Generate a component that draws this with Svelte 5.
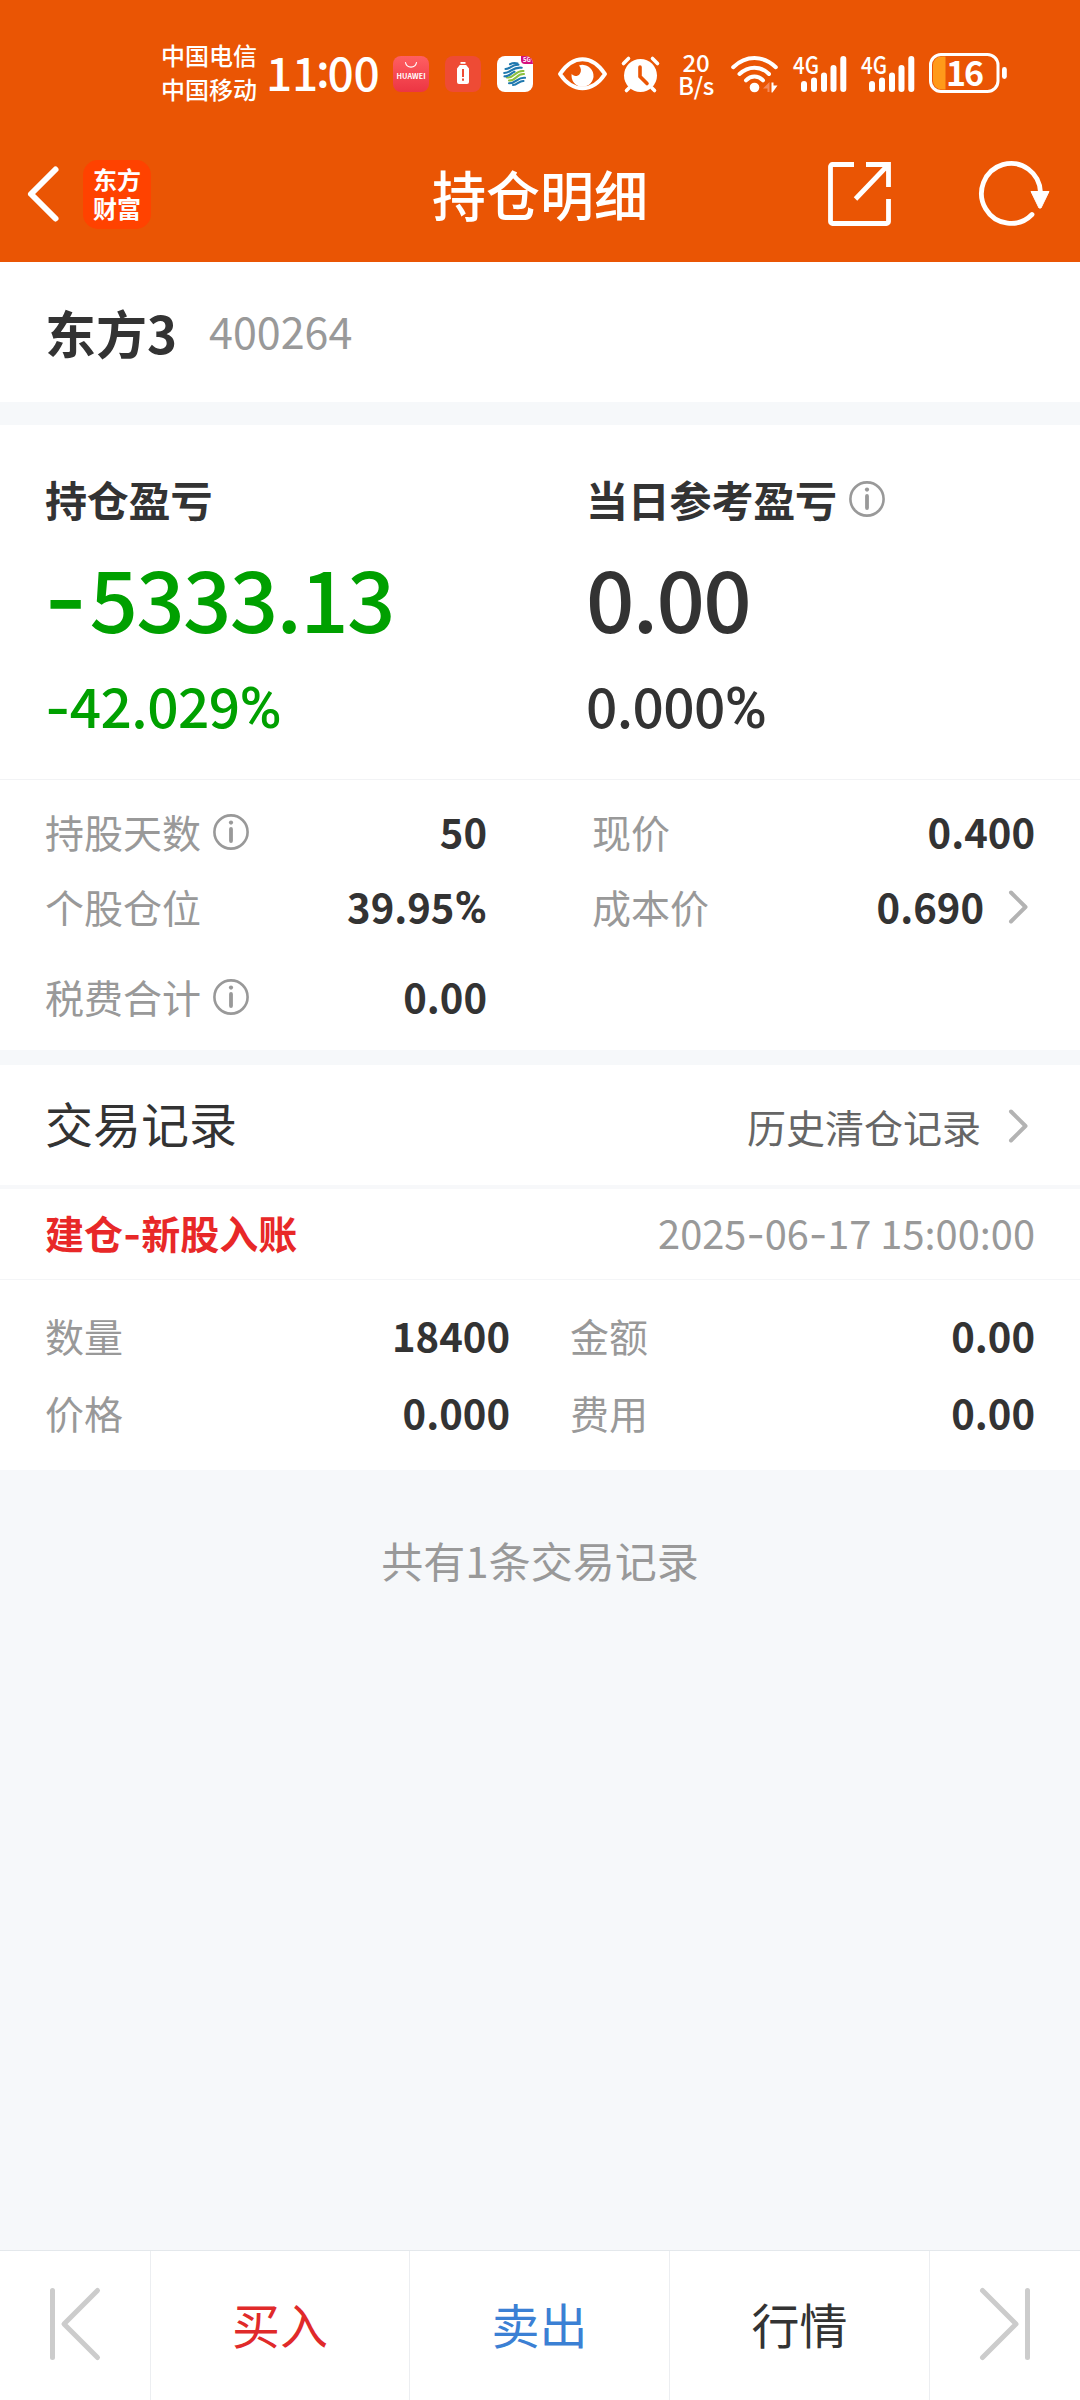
<script lang="ts">
  type Cell = {
    label: string;
    value: string;
    info?: boolean;
    link?: boolean;
  };

  const carriers = ["中国电信", "中国移动"];
  const signalBars = [
    { x: 8, y: 25, h: 11 },
    { x: 18, y: 21.5, h: 14.5 },
    { x: 28, y: 16.5, h: 19.5 },
    { x: 37.5, y: 9, h: 27 },
    { x: 47.3, y: 0, h: 36 },
  ];

  const stock = { name: "东方3", code: "400264" };

  const detailRows: Cell[][] = [
    [
      { label: "持股天数", value: "50", info: true },
      { label: "现价", value: "0.400" },
    ],
    [
      { label: "个股仓位", value: "39.95%" },
      { label: "成本价", value: "0.690", link: true },
    ],
    [{ label: "税费合计", value: "0.00", info: true }],
  ];

  const records = [
    {
      title: "建仓-新股入账",
      time: "2025-06-17 15:00:00",
      cells: [
        { label: "数量", value: "18400" },
        { label: "金额", value: "0.00" },
        { label: "价格", value: "0.000" },
        { label: "费用", value: "0.00" },
      ],
    },
  ];

  const actions = [
    { label: "买入", kind: "buy" },
    { label: "卖出", kind: "sell" },
    { label: "行情", kind: "quote" },
  ];
</script>

<!-- hyphen and percent sign come from other faces than the digits -->
{#snippet figure(text: string)}
  {#each text.split(/([-%])/) as part}{#if part === "-"}<span class="dash">-</span>{:else if part === "%"}<span class="pct">%</span>{:else}{part}{/if}{/each}
{/snippet}

{#snippet infoIcon()}
  <svg class="info" width="36" height="36" viewBox="0 0 36 36">
    <circle cx="18" cy="18" r="16.6" fill="none" stroke="currentColor" stroke-width="2.6" />
    <circle cx="18" cy="8.6" r="2.1" fill="currentColor" />
    <path d="M18 15v12" stroke="currentColor" stroke-width="3.8" stroke-linecap="round" />
  </svg>
{/snippet}

{#snippet chevron()}
  <svg class="chevron" width="19" height="34" viewBox="0 0 19 34">
    <path d="M2 2.5 16.5 17 2 31.5" fill="none" stroke="#b3b3b3" stroke-width="4" stroke-linecap="round" stroke-linejoin="round" />
  </svg>
{/snippet}

{#snippet signal()}
  <svg class="signal" width="54" height="36" viewBox="0 0 54 36" fill="#fff">
    <text x="0" y="17.5" textLength="26" lengthAdjust="spacingAndGlyphs" font-size="24" font-weight="500">4G</text>
    {#each signalBars as bar}
      <rect x={bar.x} y={bar.y} width="6" height={bar.h} rx="3" />
    {/each}
  </svg>
{/snippet}

<div class="screen">
  <header>
    <div class="status">
      <div class="carriers">
        {#each carriers as carrier}
          <span>{carrier}</span>
        {/each}
      </div>
      <span class="clock">11<i>:</i>00</span>
      <div class="apps">
        <svg width="36" height="36" viewBox="0 0 36 36">
          <defs>
            <linearGradient id="hw" x1="0" y1="0" x2="0" y2="1">
              <stop offset="0" stop-color="#ff5f62" />
              <stop offset="1" stop-color="#ec3543" />
            </linearGradient>
          </defs>
          <rect width="36" height="36" rx="8" fill="url(#hw)" />
          <path d="M12.5 6.5a5.6 5.6 0 0 0 11 0" fill="none" stroke="#fff" stroke-width="1.2" stroke-linecap="round" />
          <text x="3.6" y="23" textLength="29" lengthAdjust="spacingAndGlyphs" font-size="6.8" font-weight="700" fill="#fff">HUAWEI</text>
        </svg>
        <svg width="36" height="36" viewBox="0 0 36 36">
          <rect width="36" height="36" rx="8" fill="#ee4b35" />
          <path d="M15.5 6h5v1.8h-5z" fill="#fff" />
          <path fill-rule="evenodd" d="M14.8 9h6.4l2.8 3.4V26a2 2 0 0 1-2 2h-8a2 2 0 0 1-2-2V12.4zM17 13v8h2v-8zM17 22.6v2.2h2v-2.2z" fill="#fff" />
        </svg>
        <svg width="36" height="36" viewBox="0 0 36 36">
          <defs>
            <clipPath id="tile"><rect width="36" height="36" rx="8" /></clipPath>
          </defs>
          <g clip-path="url(#tile)">
            <rect width="36" height="36" fill="#fff" />
            <path d="M24 0h12v8h-8a4 4 0 0 1-4-4z" fill="#d5107d" />
            <text x="26" y="6.2" font-size="6" font-weight="700" fill="#fff">5G</text>
          </g>
          <g fill="none" stroke-width="2.1" stroke-linecap="round">
            <path d="M8.5 13c5 0 6-4.500 13-4.200M7.200 17c7 0 8-6.500 17.500-5.300M13 8.200c2-1 5-1.500 7.500-.6" stroke="#1f78ae" />
            <path d="M10 21.500c8 1 8-7.500 16.500-6.500M12 24.500c8 0 7-7 15-6.500" stroke="#8bbf3f" />
            <path d="M12 27.300c8 0 8-6.300 16-5.500M16 29c4.500 0 6-4.300 10.500-4M7.500 20.300c5 .5 7-3.800 10-4.500" stroke="#1f78ae" />
          </g>
        </svg>
      </div>
      <svg class="eye" width="49" height="34" viewBox="0 0 49 34">
        <path d="M2 17C8 8 16 2.2 24.5 2.2S41 8 47 17c-6 9-14 14.300-22.500 14.300S8 26 2 17z" fill="none" stroke="#fff" stroke-width="4" stroke-linejoin="round" />
        <path d="M21 8.400a11 11 0 1 1-7.300 8.400c1.500 2.800 6 2.900 8 .1 1.900-2.700 1.600-6-.7-8.500z" fill="#fff" />
      </svg>
      <svg class="alarm" width="39" height="37" viewBox="0 0 39 37">
        <g stroke="#fff" stroke-width="3.6" stroke-linecap="round">
          <path d="M2.500 7.500l5-5M36.500 7.500l-5-5M8 32l-2.500 2.500M31 32l2.500 2.500" />
        </g>
        <circle cx="19.5" cy="19.5" r="16.5" fill="#fff" />
        <path d="M19 11v9.500l7 7" fill="none" stroke="#ea5504" stroke-width="3.6" stroke-linecap="round" />
      </svg>
      <div class="speed"><span>20</span><span>B/s</span></div>
      <svg class="wifi" width="48" height="37" viewBox="0 0 48 37">
        <g fill="none" stroke="#fff" stroke-width="4" stroke-linecap="round">
          <path d="M2.200 11.200C15-1 32-1 44.800 11.200M8.500 18c9-8.500 21-8.500 29.500 0M15 24.300c5-5 12-5 17 0" />
        </g>
        <circle cx="23.5" cy="31.5" r="4.8" fill="#fff" />
        <path d="M38.500 26v10h-2v-3.500H32z" fill="#f5895a" />
        <path d="M40.500 26.500h2v3h4l-5 7h-1z" fill="#fff" />
      </svg>
      {@render signal()}
      {@render signal()}
      <svg class="battery" width="79" height="40" viewBox="0 0 79 40">
        <path d="M4 12a8.500 8.500 0 0 1 8.500-8.500H16.500v33H12.500A8.500 8.500 0 0 1 4 28z" fill="#ff9a1a" />
        <rect x="1.5" y="1.5" width="67.5" height="37" rx="10.5" fill="none" stroke="#fff" stroke-width="3" />
        <rect x="73" y="14" width="4.8" height="12" rx="2.4" fill="#fff" />
        <text x="17" y="32.5" textLength="38" lengthAdjust="spacing" font-size="34" font-weight="700" fill="#fff">16</text>
      </svg>
    </div>

    <div class="nav">
      <svg class="back" width="32" height="56" viewBox="0 0 32 56">
        <path d="M28.500 3.500 4 28l24.500 24.500" fill="none" stroke="#fff" stroke-width="6" stroke-linecap="round" stroke-linejoin="round" />
      </svg>
      <div class="logo"><span>东方</span><span>财富</span></div>
      <h1>持仓明细</h1>
      <svg class="share" width="63" height="64" viewBox="0 0 63 64" fill="none" stroke="#fff" stroke-width="4.8">
        <path d="M26 2.500H4.500a2 2 0 0 0-2 2v55a2 2 0 0 0 2 2h54a2 2 0 0 0 2-2V37" />
        <path d="M38 2.500h22.500V25M60 3 27.500 37" />
      </svg>
      <svg class="refresh" width="72" height="66" viewBox="0 0 72 66">
        <path d="M61.500 31.500A29.500 30 0 1 0 53 53.500" fill="none" stroke="#fff" stroke-width="4.8" stroke-linecap="round" />
        <path d="M52 30.500h18L62 47h-2z" fill="#fff" stroke="#fff" stroke-width="1" stroke-linejoin="round" />
      </svg>
    </div>
  </header>

  <section class="stock">
    <strong>{stock.name}</strong>
    <span>{stock.code}</span>
  </section>

  <section class="summary">
    <div class="profit loss">
      <h2>持仓盈亏</h2>
      <p class="amount">{@render figure("-5333.13")}</p>
      <p class="percent">{@render figure("-42.029%")}</p>
    </div>
    <div class="profit">
      <h2>当日参考盈亏 {@render infoIcon()}</h2>
      <p class="amount">{@render figure("0.00")}</p>
      <p class="percent">{@render figure("0.000%")}</p>
    </div>
  </section>

  <section class="details">
    {#each detailRows as row}
      <div class="row">
        {#each row as cell}
          <div class="cell">
            <span class="label">{cell.label}</span>
            {#if cell.info}{@render infoIcon()}{/if}
            <span class="value">{@render figure(cell.value)}</span>
            {#if cell.link}{@render chevron()}{/if}
          </div>
        {/each}
      </div>
    {/each}
  </section>

  <section class="history">
    <h3>交易记录</h3>
    <div class="more">
      <span>历史清仓记录</span>
      {@render chevron()}
    </div>
  </section>

  {#each records as record}
    <section class="record">
      <div class="record-head">
        <strong>{@render figure(record.title)}</strong>
        <time>{@render figure(record.time)}</time>
      </div>
      <div class="record-body">
        {#each record.cells as cell}
          <div class="cell">
            <span class="label">{cell.label}</span>
            <span class="value">{@render figure(cell.value)}</span>
          </div>
        {/each}
      </div>
    </section>
  {/each}

  <p class="total">共有{records.length}条交易记录</p>

  <footer>
    <div class="step">
      <svg width="50" height="72" viewBox="0 0 50 72" fill="none" stroke="#ccc" stroke-width="5" stroke-linecap="round" stroke-linejoin="round">
        <path d="M2.500 2.500v67M47.500 2.500 14 36l33.500 33.500" />
      </svg>
    </div>
    {#each actions as action}
      <div class="action {action.kind}">{action.label}</div>
    {/each}
    <div class="step">
      <svg width="50" height="72" viewBox="0 0 50 72" fill="none" stroke="#ccc" stroke-width="5" stroke-linecap="round" stroke-linejoin="round">
        <path d="M47.500 2.500v67M2.500 2.500 36 36 2.500 69.500" />
      </svg>
    </div>
  </footer>
</div>

<style>
  :global(body) {
    background: #f6f8fa;
  }

  .screen {
    display: flex;
    flex-direction: column;
    width: 1080px;
    height: 2400px;
    color: #333;
    background: #f6f8fa;
    font-family: "Noto Sans CJK SC", sans-serif;
  }

  .screen * { box-sizing: border-box; }
  h1, h2, h3, p { margin: 0; }
  svg { display: block; flex: none; overflow: visible; }

  .dash {
    font-family: Inter, sans-serif;
    line-height: 0;
  }

  .pct {
    font-family: Roboto, sans-serif;
    font-size: 1.04em;
    line-height: 0;
  }

  header {
    height: 262px;
    color: #fff;
    background: #ea5504;
  }

  .status {
    display: flex;
    align-items: center;
    height: 126px;
    padding: 22px 0 0 161px;
  }

  .carriers {
    display: flex;
    flex-direction: column;
    width: 97px;
    font-size: 24px;
    font-weight: 500;
    line-height: 34px;
    margin-top: -5px;
  }

  .clock {
    width: 121px;
    margin: -6px 0 0 8px;
    font-size: 46px;
    font-weight: 500;
    letter-spacing: -0.2px;
    line-height: 60px;
    white-space: nowrap;
  }

  .clock i {
    position: relative;
    top: -4px;
    margin: 0 -2px;
    font-style: normal;
  }

  .apps {
    display: flex;
    gap: 16px;
    margin-left: 6px;
  }

  .eye { margin: -1px 0 0 25px; }
  .alarm { margin-left: 14px; }

  .speed {
    display: flex;
    flex-direction: column;
    align-items: center;
    width: 36px;
    margin: -3px 0 0 18px;
    font-size: 24px;
    line-height: 23px;
    font-weight: 500;
    letter-spacing: -0.3px;
  }

  .wifi { margin-left: 17px; }
  .signal { margin-left: 14px; }
  .battery { margin: -2px 0 0 14px; }

  .nav {
    display: flex;
    align-items: center;
    height: 136px;
    padding-left: 27px;
  }

  .logo {
    display: flex;
    flex-direction: column;
    align-items: center;
    justify-content: center;
    width: 68px;
    height: 69px;
    margin-left: 24px;
    border-radius: 15px;
    background: #ff4200;
    font-size: 24px;
    font-weight: 700;
    line-height: 29px;
    padding-bottom: 3px;
  }

  h1 {
    width: 216px;
    margin: 0 0 0 281px;
    font-size: 54px;
    font-weight: 500;
    line-height: 80px;
  }

  .share { margin-left: 180px; }
  .refresh { margin-left: 88px; }

  .stock {
    display: flex;
    align-items: center;
    height: 140px;
    padding: 0 45px 4px;
    background: #fff;
  }

  .stock strong {
    margin-top: 3px;
    font-size: 51px;
  }

  .stock span {
    margin-left: 32px;
    color: #999;
    font-size: 43px;
  }

  .summary {
    display: grid;
    grid-template-columns: 541px 1fr;
    height: 355px;
    margin-top: 23px;
    padding: 34px 0 0 45px;
    border-bottom: 1px solid #f2f3f5;
    background: #fff;
  }

  h2 {
    display: flex;
    align-items: center;
    gap: 12px;
    font-size: 42px;
    line-height: 80px;
    letter-spacing: -0.2px;
  }

  .amount {
    font-size: 85px;
    font-weight: 500;
    letter-spacing: -1.7px;
    line-height: 113px;
  }

  .amount .dash {
    margin: 0 4px 0 -1px;
    font-size: 1.1em;
  }

  .percent {
    font-size: 55px;
    font-weight: 500;
    letter-spacing: -0.6px;
    line-height: 105px;
  }

  .loss .amount,
  .loss .percent { color: #00a000; }

  .info {
    color: #999;
  }

  .details {
    height: 270px;
    padding: 13px 45px 0;
    background: #fff;
  }

  .row {
    display: grid;
    grid-template-columns: 442px 443px;
    column-gap: 105px;
    height: 75px;
  }

  .row:last-child { height: 106px; }

  .cell {
    display: flex;
    align-items: center;
  }

  .label {
    color: #999;
    font-size: 39px;
  }

  .cell .info { margin: 2px 0 0 12px; }

  .value {
    margin-left: auto;
    font-size: 40px;
    font-weight: 700;
  }

  .value .pct { font-size: 1.1em; }

  .cell .chevron { margin: 3px 7px 0 25px; }

  .history {
    display: flex;
    align-items: center;
    justify-content: space-between;
    height: 124px;
    margin-top: 15px;
    padding: 0 52px 6px 45px;
    border-bottom: 4px solid #f7f8fa;
    background: #fff;
  }

  h3 {
    font-size: 48px;
    font-weight: 400;
  }

  .more {
    display: flex;
    align-items: center;
    gap: 28px;
    padding-top: 8px;
    color: #666;
    font-size: 39px;
  }

  .record { background: #fff; }

  .record-head {
    display: flex;
    align-items: center;
    justify-content: space-between;
    height: 91px;
    padding: 0 45px 5px;
    border-bottom: 1px solid #f4f5f7;
    font-size: 39px;
  }

  .record-head strong { color: #e82828; }

  .record-head time {
    color: #999;
    font-size: 39.8px;
  }

  .record-body {
    display: grid;
    grid-template-columns: 465px 465px;
    grid-auto-rows: 77px;
    column-gap: 60px;
    height: 190px;
    padding: 16px 45px 0;
  }

  .total {
    margin-top: 60px;
    color: #999;
    font-size: 42px;
    line-height: 60px;
    text-align: center;
  }

  footer {
    display: grid;
    grid-template-columns: 150px 259px 260px 260px 151px;
    height: 150px;
    margin-top: auto;
    border-top: 1px solid #e4e8ec;
    background: #fff;
  }

  .step {
    display: flex;
    justify-content: center;
    padding-top: 37px;
  }

  .action {
    padding-top: 32px;
    border-left: 1px solid #eceef1;
    font-size: 48px;
    line-height: 80px;
    text-align: center;
  }

  .action + .step { border-left: 1px solid #eceef1; }

  .buy { color: #e02a2a; }
  .sell { color: #3b80d4; }
</style>
